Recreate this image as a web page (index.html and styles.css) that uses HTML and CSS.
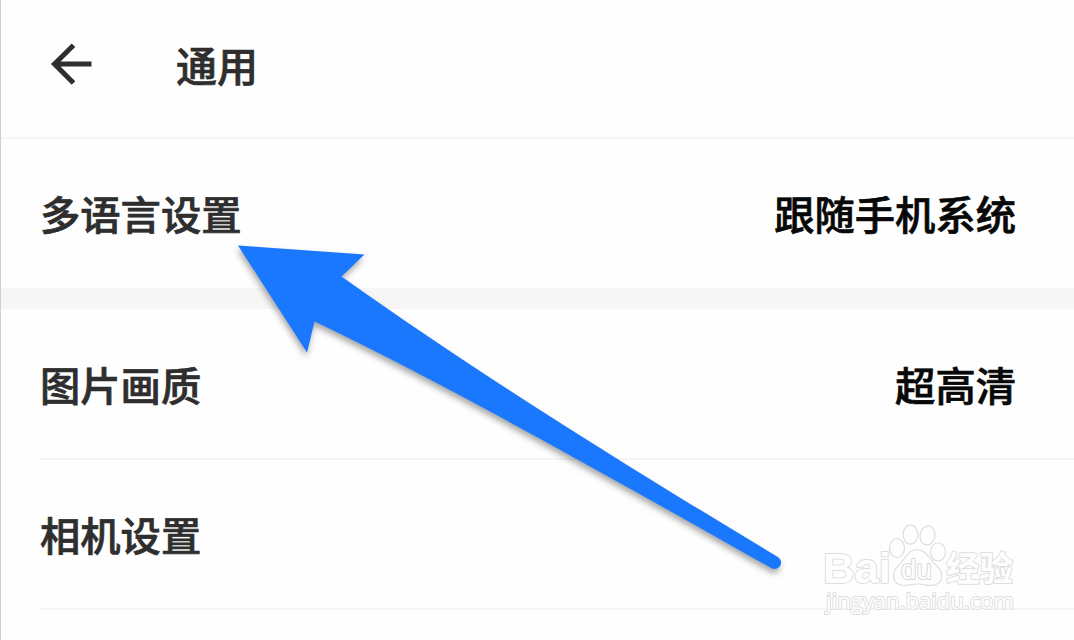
FILE: index.html
```html
<!DOCTYPE html>
<html lang="zh-CN">
<head>
    <meta charset="UTF-8">
    <meta name="viewport" content="width=device-width, initial-scale=1.0">
    <title>通用</title>
    <link rel="stylesheet" href="styles.css">
</head>
<body>
    <div class="page">
        <header class="header">
            <svg class="back" width="44" height="44" viewBox="0 0 44 44">
                <path d="M41.500 22H5M23.500 3.300L4.500 22L23.500 41"/>
            </svg>
            <h1 class="title">通用</h1>
        </header>

        <section class="group">
            <div class="row">
                <span class="label">多语言设置</span>
                <span class="value">跟随手机系统</span>
            </div>
        </section>

        <section class="group">
            <div class="row">
                <span class="label">图片画质</span>
                <span class="value">超高清</span>
            </div>
            <div class="row">
                <span class="label">相机设置</span>
            </div>
        </section>

        <svg class="pointer" width="1074" height="640" viewBox="0 0 1074 640">
            <path d="M238 245.500L364.500 254.500L341.500 276.500C470 368 620 462 777 556.500A6.300 6.300 0 0 1 772 568.500C620 483 450 386 314.500 321.500L307 352.500Z"/>
        </svg>

        <svg class="watermark" width="204" height="96" viewBox="820 520 204 96">
            <text class="brand" x="823" y="583" textLength="68" lengthAdjust="spacingAndGlyphs">Bai</text>
            <ellipse cx="897" cy="548" rx="7.500" ry="9.500"/>
            <ellipse cx="910.500" cy="534.500" rx="7.300" ry="9.700"/>
            <ellipse cx="927.500" cy="535.500" rx="7.500" ry="9.500" transform="rotate(12 927.500 535.500)"/>
            <ellipse cx="938" cy="552" rx="7.500" ry="9"/>
            <path d="M917 549.500C908 549.500 905 560 898 566C891 573 892 583 901 585C908 586 912 584 918 584C925 584 930 587 936 584.500C944 581 943 572 937 566C930 560 926 549.500 917 549.500Z"/>
            <text class="du" x="901" y="579" textLength="31" lengthAdjust="spacingAndGlyphs">du</text>
            <text class="cn" x="946" y="581" textLength="67" lengthAdjust="spacingAndGlyphs">经验</text>
            <text class="url" x="826" y="609" textLength="188" lengthAdjust="spacingAndGlyphs">jingyan.baidu.com</text>
        </svg>
    </div>
</body>
</html>
```

FILE: styles.css
```css
* {
    box-sizing: border-box;
}
body {
    margin: 0;
    background: #fefefe;
    font-family: 'Noto Sans CJK SC', sans-serif;
    color: #2e2e2e;
}
.page {
    position: relative;
    height: 640px;
    overflow: hidden;
    border-left: 1px solid #cfcfcf;
}
.header {
    display: flex;
    align-items: center;
    gap: 82px;
    height: 139px;
    padding: 0 0 9px 49px;
    border-bottom: 2px solid #f4f4f4;
}
.back {
    fill: none;
    stroke: #2e2e2e;
    stroke-width: 5;
}
.title {
    margin: 0;
    font-size: 41px;
    line-height: 58px;
    font-weight: 500;
    -webkit-text-stroke: 0.7px;
}
.group + .group {
    padding-top: 1px;
    border-top: 21px solid #f6f6f6;
}
.row {
    display: flex;
    align-items: center;
    justify-content: space-between;
    height: 149px;
    margin-left: 39px;
    padding: 0 58px 2px 0;
    font-size: 40.3px;
    line-height: 60px;
    font-weight: 500;
    -webkit-text-stroke: 0.7px;
}
.group + .group .row {
    height: 150px;
    padding-bottom: 0;
    border-bottom: 2px solid #f4f4f4;
}
.value {
    color: #080808;
}
.pointer {
    position: absolute;
    top: 0;
    left: -1px;
    fill: #1a78ff;
    filter: drop-shadow(-1px 4px 3px rgba(0, 0, 0, 0.35));
}
.watermark {
    position: absolute;
    top: 520px;
    left: 819px;
    fill: #fefefe;
    stroke: #dedede;
    stroke-width: 1.2;
}
.watermark text {
    paint-order: stroke;
    stroke-width: 2;
    stroke-linejoin: round;
}
.brand {
    font: bold 43px 'Liberation Sans', sans-serif;
}
.watermark .du {
    font: 27px 'Liberation Sans', sans-serif;
    stroke: #d6d6d6;
    stroke-width: 1.8;
}
.cn {
    font: bold 34px 'Noto Sans CJK SC', sans-serif;
}
.url {
    font: 22px 'Open Sans', sans-serif;
}
```
